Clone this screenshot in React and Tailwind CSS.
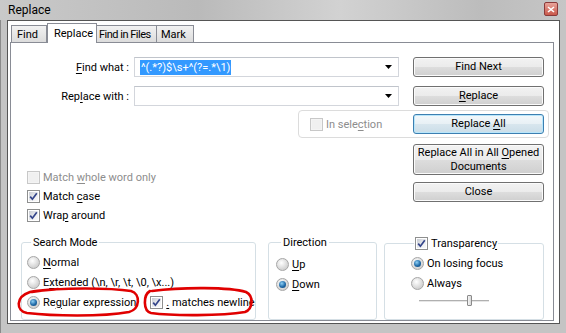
import React from "react";

function U({ children }) {
  return <span className="underline underline-offset-[2px] decoration-[1px]">{children}</span>;
}

function Check({ checked, disabled }) {
  return (
    <span
      className={`w-[13px] h-[13px] shrink-0 border p-[1px] flex ${
        disabled ? "border-[#c8c8c8] bg-[#f4f4f4]" : "border-[#8e8f8f] bg-white"
      }`}
    >
      <span
        className={`flex-1 flex items-center justify-center ${
          disabled
            ? "bg-[#f0f0f0]"
            : "bg-[linear-gradient(135deg,#c7cbd2,#eeeff2_60%,#f9f9f9)]"
        }`}
      >
        {checked && (
          <svg width="9" height="9" viewBox="0 0 9 9">
            <path d="M1.2 4.6 L3.4 7.2 L7.8 1.2" stroke="#34458a" strokeWidth="1.7" fill="none" />
          </svg>
        )}
      </span>
    </span>
  );
}

function Radio({ checked }) {
  return (
    <span className="w-[13px] h-[13px] shrink-0 rounded-full border border-[#a6a6a6] bg-[radial-gradient(circle_at_40%_35%,#ffffff,#d8d8d8_60%,#c4c4c4)] flex items-center justify-center">
      {checked && (
        <span className="w-[7px] h-[7px] rounded-full bg-[radial-gradient(circle_at_40%_35%,#8fd0f5,#1f6aa8_55%,#0e3f6e)]" />
      )}
    </span>
  );
}

function Btn({ children, focused, h = "h-[20px]" }) {
  return (
    <div
      className={`w-[131px] ${h} shrink-0 rounded-[3px] border ${
        focused
          ? "border-[#3c7fb1] shadow-[inset_0_0_0_1px_#b8e6fb] bg-[linear-gradient(#f2f8fb_0%,#e8f0f5_50%,#d8e6ee_51%,#cadde8_100%)]"
          : "border-[#707070] shadow-[inset_0_0_0_1px_#fbfbfb] bg-[linear-gradient(#f2f2f2_0%,#ebebeb_50%,#dddddd_51%,#cfcfcf_100%)]"
      } flex items-center justify-center text-center`}
    >
      <span className="leading-[14px]">{children}</span>
    </div>
  );
}

function Combo({ children }) {
  return (
    <div className="w-[265px] h-[20px] shrink-0 border border-[#d3d6dc] border-t-[#c0c4cb] bg-white flex items-center pl-[5px] pr-[6px]">
      <div className="flex-1 flex items-center">{children}</div>
      <svg width="7" height="4" viewBox="0 0 7 4">
        <path d="M0 0 H7 L3.5 4 Z" fill="#000" />
      </svg>
    </div>
  );
}

function Row({ children, className = "" }) {
  return <div className={`flex items-center h-[16px] gap-[3px] whitespace-nowrap ${className}`}>{children}</div>;
}

export default function App() {
  return (
    <div className="relative w-[566px] h-[333px] overflow-hidden bg-[#c4c4c4] flex flex-col font-['Roboto','Liberation_Sans',sans-serif] text-[11px] text-black leading-[15px]">
      {/* Title bar */}
      <div className="h-[20px] shrink-0 flex items-center pl-[8px] bg-[linear-gradient(90deg,#c9c9c9,#bababa_35%,#d2d2d2_60%,#bcbcbc_85%,#c6c6c6)]">
        <span className="text-[12px] pt-[1px]">Replace</span>
        <div className="ml-auto mr-[8px] mt-[-2px] w-[14px] h-[14px] rounded-[2px] border border-[#8a3a3a] bg-[linear-gradient(#e8a49a,#c9584a)] flex items-center justify-center">
          <svg width="8" height="7" viewBox="0 0 8 7">
            <path d="M1 1 L7 6 M7 1 L1 6" stroke="#fff" strokeWidth="1.6" />
          </svg>
        </div>
      </div>

      {/* Window body */}
      <div className="flex-1 flex pl-[6px] pr-[6px] pb-[9px] border-l border-[#8a8a8a]">
        <div className="flex-1 flex flex-col bg-white border border-[#555] pt-[2px] pl-[2px] pr-[5px] pb-[2px]">
          {/* Tabs */}
          <div className="flex items-end h-[19px] pl-[1px] relative z-10 whitespace-nowrap">
            <div className="h-[17px] w-[36px] border border-[#898c95] border-b-0 bg-[linear-gradient(#f2f2f2,#dcdcdc)] flex items-center pl-[5px]">
              Find
            </div>
            <div className="h-[20px] w-[50px] border border-[#898c95] border-b-0 bg-white flex items-center pl-[6px] -mb-[1px]">
              Replace
            </div>
            <div className="h-[17px] w-[60px] border border-l-0 border-[#898c95] border-b-0 bg-[linear-gradient(#f2f2f2,#dcdcdc)] flex items-center pl-[2px] overflow-hidden tracking-[-0.5px]">
              Find in Files
            </div>
            <div className="h-[17px] w-[37px] border border-l-0 border-[#898c95] border-b-0 bg-[linear-gradient(#f2f2f2,#dcdcdc)] flex items-center pl-[4px]">
              Mark
            </div>
          </div>

          {/* Panel */}
          <div className="flex-1 border border-[#898c95] bg-white flex flex-col">
            {/* Row A */}
            <div className="flex items-center mt-[14px] h-[20px]">
              <div className="w-[118px] text-right whitespace-nowrap">
                <U>F</U>ind what :
              </div>
              <div className="ml-[5px]">
                <Combo>
                  <span className="bg-[#3399ff] text-white px-[1px] leading-[15px]">^(.*?)$\s+^(?=.*\1)</span>
                </Combo>
              </div>
              <div className="ml-[14px]">
                <Btn>Find Next</Btn>
              </div>
            </div>
            {/* Row B */}
            <div className="flex items-center mt-[9px] h-[20px]">
              <div className="w-[118px] text-right whitespace-nowrap">
                Rep<U>l</U>ace with :
              </div>
              <div className="ml-[5px]">
                <Combo />
              </div>
              <div className="ml-[14px]">
                <Btn>
                  <U>R</U>eplace
                </Btn>
              </div>
            </div>
            {/* Row C */}
            <div className="flex mt-[4px]">
              <div className="ml-[287px] w-[251px] h-[28px] rounded-[4px] border border-[#dcdcdc] flex items-center justify-between pl-[11px] pr-[4px]">
                <Row className="text-[#8d8d8d]">
                  <Check disabled />
                  <span>
                    In sele<U>c</U>tion
                  </span>
                </Row>
                <Btn focused>
                  Replace <U>A</U>ll
                </Btn>
              </div>
            </div>
            {/* Row D */}
            <div className="flex mt-[6px] h-[79px]">
              <div className="ml-[16px] mt-[25px] flex flex-col gap-[3px]">
                <Row className="text-[#8d8d8d]">
                  <Check disabled />
                  <span>
                    Match <U>w</U>hole word only
                  </span>
                </Row>
                <Row>
                  <Check checked />
                  <span>
                    Match <U>c</U>ase
                  </span>
                </Row>
                <Row>
                  <Check checked />
                  <span>
                    Wra<U>p</U> around
                  </span>
                </Row>
              </div>
              <div className="ml-auto mr-[9px] flex flex-col gap-[7px]">
                <Btn h="h-[31px]">
                  Replace All in All <U>O</U>pened
                  <br />
                  Documents
                </Btn>
                <Btn>Close</Btn>
              </div>
            </div>
            {/* Groups */}
            <div className="flex mt-[12px] ml-[10px] h-[85px] items-stretch whitespace-nowrap">
              <fieldset className="w-[235px] border border-[#d5dfe5] rounded-[3px] pl-[5px] pt-[4px]">
                <legend className="ml-[4px] px-[2px]">Search Mode</legend>
                <div className="flex flex-col gap-[4px]">
                  <Row>
                    <Radio />
                    <span>
                      <U>N</U>ormal
                    </span>
                  </Row>
                  <Row>
                    <Radio />
                    <span>
                      E<U>x</U>tended (\n, \r, \t, \0, \x...)
                    </span>
                  </Row>
                  <div className="flex items-center h-[16px]">
                    <Row>
                      <Radio checked />
                      <span>
                        Re<U>g</U>ular expression
                      </span>
                    </Row>
                    <Row className="ml-[14px]">
                      <Check checked />
                      <span>
                        <U>.</U> matches newline
                      </span>
                    </Row>
                  </div>
                </div>
              </fieldset>
              <fieldset className="ml-[12px] w-[109px] border border-[#d5dfe5] rounded-[3px] pl-[7px] pt-[6px]">
                <legend className="ml-[5px] px-[2px]">Direction</legend>
                <div className="flex flex-col gap-[4px]">
                  <Row>
                    <Radio />
                    <span>
                      <U>U</U>p
                    </span>
                  </Row>
                  <Row>
                    <Radio checked />
                    <span>
                      <U>D</U>own
                    </span>
                  </Row>
                </div>
              </fieldset>
              <fieldset className="ml-[7px] w-[160px] border border-[#d5dfe5] rounded-[3px] pl-[26px] pt-[4px]">
                <legend className="ml-[3px] px-[1px]">
                  <Row>
                    <Check checked />
                    <span>
                      Transparenc<U>y</U>
                    </span>
                  </Row>
                </legend>
                <div className="flex flex-col gap-[4px]">
                  <Row>
                    <Radio checked />
                    <span>On losing focus</span>
                  </Row>
                  <Row>
                    <Radio />
                    <span>Always</span>
                  </Row>
                  <div className="ml-[8px] mt-[1px] w-[70px] h-[11px] flex items-center">
                    <div className="relative w-full h-[3px] border-t border-[#b0b0b0] border-b border-b-[#ffffff] bg-[#e6e6e6]">
                      <div className="absolute left-[48px] top-[-6px] w-[5px] h-[11px] border border-[#8a8a8a] rounded-[1px] bg-[linear-gradient(90deg,#f5f5f5,#d8d8d8)]" />
                    </div>
                  </div>
                </div>
              </fieldset>
            </div>
          </div>
        </div>
      </div>

      {/* Red hand-drawn annotations */}
      <svg className="absolute left-0 top-0 pointer-events-none" width="566" height="333" viewBox="0 0 566 333">
        <path
          d="M32 292 C60 287 112 288 131 291 C141 294 140 309 129 312 C102 317 52 316 27 313 C16 311 15 297 30 292 C40 290 50 290 58 289"
          stroke="#e00000"
          strokeWidth="2.6"
          fill="none"
          strokeLinecap="round"
        />
        <path
          d="M152 291 C182 287 230 287 246 292 C254 296 253 309 245 312 C222 316 172 316 151 313 C143 311 143 295 150 291"
          stroke="#e00000"
          strokeWidth="2.6"
          fill="none"
          strokeLinecap="round"
        />
      </svg>
    </div>
  );
}
